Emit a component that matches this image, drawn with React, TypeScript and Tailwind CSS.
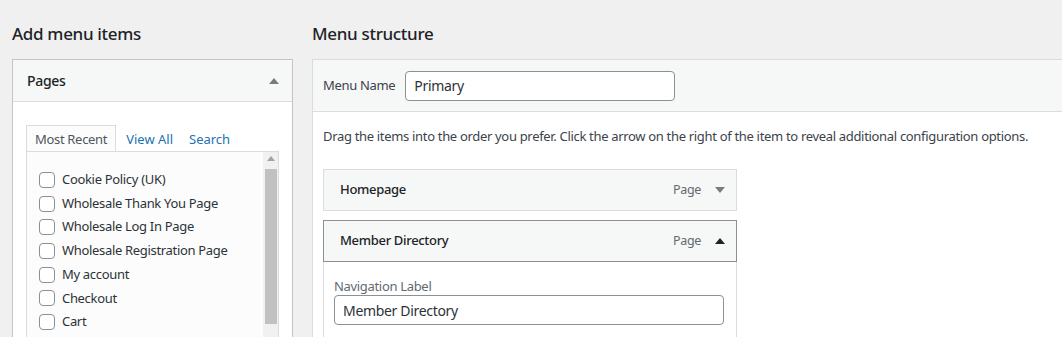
import React from 'react';

const pages = [
    'Cookie Policy (UK)',
    'Wholesale Thank You Page',
    'Wholesale Log In Page',
    'Wholesale Registration Page',
    'My account',
    'Checkout',
    'Cart',
];

function Triangle({ up, className }: { up?: boolean; className: string }) {
    return (
        <svg width="10" height="6" viewBox="0 0 10 6" className={className}>
            {up ? <path d="M0 6 L5 0 L10 6 Z" fill="currentColor" /> : <path d="M0 0 L10 0 L5 6 Z" fill="currentColor" />}
        </svg>
    );
}

function MenuItem({ title, open }: { title: string; open?: boolean }) {
    return (
        <div
            className={`flex items-center h-[42px] bg-[#f6f7f7] border pl-[16px] pr-[11px] ${
                open ? 'border-[#8c8f94]' : 'border-[#dcdcde]'
            }`}
        >
            <span className="text-[13px] font-medium text-[#1d2327]">{title}</span>
            <span className="ml-auto text-[12.5px] text-[#646970]">Page</span>
            <Triangle up={open} className={`ml-[14px] ${open ? 'text-[#1d2327]' : 'text-[#787c82]'}`} />
        </div>
    );
}

export default function App() {
    return (
        <div
            className="w-[1062px] h-[337px] overflow-hidden bg-[#f0f0f1] flex pl-[12px] text-[#2c3338] tracking-[-0.32px]"
            style={{ fontFamily: '"Noto Sans", "Open Sans", sans-serif' }}
        >
            {/* left column */}
            <div className="w-[281px] shrink-0 pt-[22px]">
                <h2 className="text-[17px] leading-[23px] font-medium text-[#1d2327] mb-[14px]">Add menu items</h2>
                <div className="border border-[#c3c4c7] bg-white h-[300px]">
                    <div className="flex items-center h-[42px] bg-[#f6f7f7] border-b border-[#dcdcde] pl-[14px] pr-[13px]">
                        <span className="text-[14px] font-medium text-[#1d2327]">Pages</span>
                        <Triangle up className="ml-auto text-[#787c82]" />
                    </div>
                    <div className="pl-[13px] pr-[13px] pt-[24px]">
                        <div className="flex items-end text-[13px] h-[25px]">
                            <div className="h-[26px] px-[8px] pt-[2px] flex items-center border border-b-0 border-[#dcdcde] bg-[#fcfcfc] relative z-10 text-[#50575e]">
                                Most Recent
                            </div>
                            <span className="h-[25px] pt-[2px] flex items-center ml-[10px] text-[#2271b1] tracking-[0px]">View All</span>
                            <span className="h-[25px] pt-[2px] flex items-center ml-[16px] text-[#2271b1] tracking-[0px]">Search</span>
                        </div>
                        <div className="border border-[#dcdcde] bg-[#fcfcfc] flex h-[200px]">
                            <div className="flex-1 pl-[12px] pt-[16px] flex flex-col">
                                {pages.map((p) => (
                                    <label key={p} className="flex items-center h-[23.7px] gap-[7px] text-[13px]">
                                        <span className="w-[16px] h-[16px] rounded-[4px] border border-[#8c8f94] bg-white shrink-0" />
                                        <span className="text-[#2c3338]">{p}</span>
                                    </label>
                                ))}
                            </div>
                            <div className="w-[15px] bg-[#f1f1f1] flex flex-col items-center">
                                <Triangle up className="mt-[4px] text-[#a3a3a3] w-[8px] h-[5px]" />
                                <div className="mt-[8px] w-[12px] h-[155px] bg-[#c1c1c1]" />
                            </div>
                        </div>
                    </div>
                </div>
            </div>

            {/* right column */}
            <div className="ml-[19px] flex-1 pt-[22px]">
                <h2 className="text-[17px] leading-[23px] font-medium text-[#1d2327] mb-[14px]">Menu structure</h2>
                <div className="border border-[#dcdcde] border-r-0 bg-white h-[300px]">
                    <div className="flex items-center h-[52px] bg-[#f6f7f7] border-b border-[#dcdcde] pl-[10px]">
                        <span className="text-[13px] text-[#3c434a]">Menu Name</span>
                        <div className="ml-[10px] w-[270px] h-[30px] rounded-[4px] border border-[#8c8f94] bg-white flex items-center px-[8px] text-[14px] text-[#2c3338]">
                            Primary
                        </div>
                    </div>
                    <div className="pl-[10px] pt-[15px]">
                        <p className="text-[13px] text-[#3c434a] leading-[19px] whitespace-nowrap">
                            Drag the items into the order you prefer. Click the arrow on the right of the item to reveal additional configuration options.
                        </p>
                        <div className="w-[414px] mt-[23px] flex flex-col gap-[9px]">
                            <MenuItem title="Homepage" />
                            <div>
                                <MenuItem title="Member Directory" open />
                                <div className="border border-t-0 border-[#dcdcde] bg-white px-[10px] pt-[15px] h-[100px]">
                                    <div className="text-[13px] text-[#646970] leading-[18px]">Navigation Label</div>
                                    <div className="w-[390px] h-[30px] rounded-[4px] border border-[#8c8f94] bg-white flex items-center px-[8px] text-[14px] text-[#2c3338]">
                                        Member Directory
                                    </div>
                                </div>
                            </div>
                        </div>
                    </div>
                </div>
            </div>
        </div>
    );
}
